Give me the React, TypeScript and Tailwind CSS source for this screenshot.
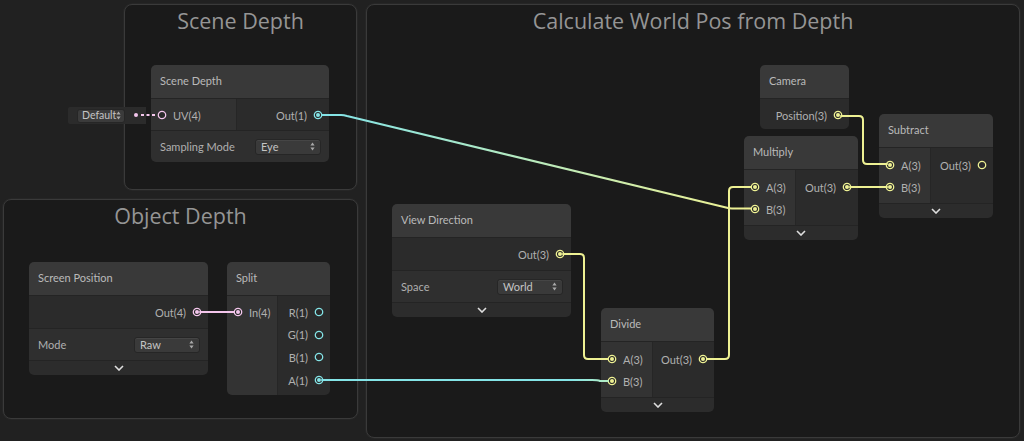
import React from 'react';

const YEL = '#EEF193';
const CYA = '#84E4E7';
const PNK = '#F4C6EC';

function Port({ color, connected }: { color: string; connected?: boolean }) {
  return (
    <svg width="10" height="10" viewBox="0 0 10 10" className="shrink-0">
      <circle cx="5" cy="5" r="3.7" fill="#2a2a2a" stroke={color} strokeWidth="1.3" />
      {connected && <circle cx="5" cy="5" r="2" fill={color} />}
    </svg>
  );
}

type P = { label: string; color: string; connected?: boolean };

function InRow({ p, h }: { p: P; h: string }) {
  return (
    <div className={`flex items-center pl-[6px] gap-[6px] ${h}`}>
      <Port color={p.color} connected={p.connected} />
      <span className="text-[11px] text-[#b0b0b0] leading-none">{p.label}</span>
    </div>
  );
}

function OutRow({ p, h }: { p: P; h: string }) {
  return (
    <div className={`flex items-center justify-end pr-[6px] gap-[6px] ${h}`}>
      <span className="text-[11px] text-[#b0b0b0] leading-none">{p.label}</span>
      <Port color={p.color} connected={p.connected} />
    </div>
  );
}

function Header({ title }: { title: string }) {
  return (
    <div className="h-[34px] flex items-center pl-[9px] bg-[#393939] border-b border-[#242424] text-[11px] text-[#bababa]">
      {title}
    </div>
  );
}

function Collapse() {
  return (
    <div className="h-[15px] flex items-center justify-center bg-[#2c2c2c] border-t border-[#242424]">
      <svg width="10" height="6" viewBox="0 0 10 6">
        <polyline points="1,1 5,5 9,1" fill="none" stroke="#dedede" strokeWidth="1.6" />
      </svg>
    </div>
  );
}

function Arrows() {
  return (
    <svg width="5" height="9" viewBox="0 0 5 9" className="shrink-0">
      <polygon points="2.5,0.5 4.6,3.4 0.4,3.4" fill="#aaaaaa" />
      <polygon points="2.5,8.5 4.6,5.6 0.4,5.6" fill="#aaaaaa" />
    </svg>
  );
}

function Dropdown({ value }: { value: string }) {
  return (
    <div className="w-[66px] h-[16px] rounded-[3px] bg-[#3a3a3a] border border-[#262626] flex items-center justify-between pl-[5px] pr-[5px] shadow-[inset_0_1px_0_#454545]">
      <span className="text-[11px] text-[#c4c4c4] leading-none">{value}</span>
      <Arrows />
    </div>
  );
}

function ControlRow({ label, value }: { label: string; value: string }) {
  return (
    <div className="h-[32px] flex items-center justify-between pl-[9px] pr-[8px] bg-[#2f2f2f] border-t border-[#242424]">
      <span className="text-[11px] text-[#b0b0b0] leading-none">{label}</span>
      <Dropdown value={value} />
    </div>
  );
}

function Group({ cls, title }: { cls: string; title: string }) {
  return (
    <div className={`absolute rounded-[8px] bg-[#1a1a1a] border border-[#3a3a3a] shadow-[0_0_0_1px_#262626] ${cls}`}>
      <div className="flex justify-center pt-[1px] text-[21.5px] leading-[30px] text-[#959595] font-['Open_Sans',sans-serif]">{title}</div>
    </div>
  );
}

export default function App() {
  return (
    <div className="relative w-[1024px] h-[441px] overflow-hidden bg-[#212121] font-['Lato',sans-serif]">
      <Group cls="left-[124px] top-[4px] w-[233px] h-[186px]" title="Scene Depth" />
      <Group cls="left-[3px] top-[199px] w-[355px] h-[220px]" title="Object Depth" />
      <Group cls="left-[366px] top-[4px] w-[654px] h-[434px]" title="Calculate World Pos from Depth" />

      {/* Default UV control */}
      <div className="absolute left-[68px] top-[107px] w-[78px] h-[17px] bg-[#2b2b2b] rounded-l-[2px] flex items-center pl-[9px]">
        <div className="w-[48px] h-[14px] rounded-[3px] bg-[#3b3b3b] border border-[#262626] flex items-center justify-between pl-[4px] pr-[3px]">
          <span className="text-[10.5px] text-[#c4c4c4] leading-none">Default</span>
          <Arrows />
        </div>
      </div>

      {/* Scene Depth node */}
      <div className="absolute left-[151px] top-[65px] w-[178px] rounded-[5px] overflow-hidden">
        <Header title="Scene Depth" />
        <div className="flex">
          <div className="w-[86px] bg-[#323232] pt-[5px] pb-[4px] border-r border-[#262626]">
            <InRow p={{ label: 'UV(4)', color: PNK }} h="h-[22px]" />
          </div>
          <div className="flex-1 bg-[#2b2b2b] pt-[5px] pb-[4px]">
            <OutRow p={{ label: 'Out(1)', color: CYA, connected: true }} h="h-[22px]" />
          </div>
        </div>
        <ControlRow label="Sampling Mode" value="Eye" />
      </div>

      {/* Screen Position node */}
      <div className="absolute left-[29px] top-[262px] w-[179px] rounded-[5px] overflow-hidden">
        <Header title="Screen Position" />
        <div className="bg-[#2b2b2b] pt-[5px] pb-[5px]">
          <OutRow p={{ label: 'Out(4)', color: PNK, connected: true }} h="h-[22px]" />
        </div>
        <ControlRow label="Mode" value="Raw" />
        <Collapse />
      </div>

      {/* Split node */}
      <div className="absolute left-[227px] top-[262px] w-[103px] rounded-[5px] overflow-hidden">
        <Header title="Split" />
        <div className="flex">
          <div className="w-[51px] bg-[#333333] pt-[5px] pb-[5px] border-r border-[#262626]">
            <InRow p={{ label: 'In(4)', color: PNK, connected: true }} h="h-[22px]" />
          </div>
          <div className="flex-1 bg-[#2b2b2b] pt-[5px] pb-[4px]">
            <OutRow p={{ label: 'R(1)', color: CYA }} h="h-[22.6px]" />
            <OutRow p={{ label: 'G(1)', color: CYA }} h="h-[22.6px]" />
            <OutRow p={{ label: 'B(1)', color: CYA }} h="h-[22.6px]" />
            <OutRow p={{ label: 'A(1)', color: CYA, connected: true }} h="h-[22.6px]" />
          </div>
        </div>
      </div>

      {/* View Direction node */}
      <div className="absolute left-[392px] top-[204px] w-[179px] rounded-[5px] overflow-hidden">
        <Header title="View Direction" />
        <div className="bg-[#2b2b2b] pt-[5px] pb-[5px]">
          <OutRow p={{ label: 'Out(3)', color: YEL, connected: true }} h="h-[22px]" />
        </div>
        <ControlRow label="Space" value="World" />
        <Collapse />
      </div>

      {/* Divide node */}
      <div className="absolute left-[601px] top-[308px] w-[113px] rounded-[5px] overflow-hidden">
        <Header title="Divide" />
        <div className="flex">
          <div className="w-[52px] bg-[#333333] pt-[6px] pb-[5px] border-r border-[#262626]">
            <InRow p={{ label: 'A(3)', color: YEL, connected: true }} h="h-[22px]" />
            <InRow p={{ label: 'B(3)', color: YEL, connected: true }} h="h-[22px]" />
          </div>
          <div className="flex-1 bg-[#2b2b2b] pt-[6px] pb-[5px]">
            <OutRow p={{ label: 'Out(3)', color: YEL, connected: true }} h="h-[22px]" />
          </div>
        </div>
        <Collapse />
      </div>

      {/* Camera node */}
      <div className="absolute left-[760px] top-[65px] w-[89px] rounded-[5px] overflow-hidden">
        <Header title="Camera" />
        <div className="bg-[#2b2b2b] pt-[5px] pb-[3px]">
          <OutRow p={{ label: 'Position(3)', color: YEL, connected: true }} h="h-[22px]" />
        </div>
      </div>

      {/* Multiply node */}
      <div className="absolute left-[744px] top-[136px] w-[114px] rounded-[5px] overflow-hidden">
        <Header title="Multiply" />
        <div className="flex">
          <div className="w-[52px] bg-[#333333] pt-[6px] pb-[5px] border-r border-[#262626]">
            <InRow p={{ label: 'A(3)', color: YEL, connected: true }} h="h-[22px]" />
            <InRow p={{ label: 'B(3)', color: YEL, connected: true }} h="h-[22px]" />
          </div>
          <div className="flex-1 bg-[#2b2b2b] pt-[6px] pb-[5px]">
            <OutRow p={{ label: 'Out(3)', color: YEL, connected: true }} h="h-[22px]" />
          </div>
        </div>
        <Collapse />
      </div>

      {/* Subtract node */}
      <div className="absolute left-[879px] top-[114px] w-[114px] rounded-[5px] overflow-hidden">
        <Header title="Subtract" />
        <div className="flex">
          <div className="w-[52px] bg-[#333333] pt-[6px] pb-[5px] border-r border-[#262626]">
            <InRow p={{ label: 'A(3)', color: YEL, connected: true }} h="h-[22px]" />
            <InRow p={{ label: 'B(3)', color: YEL, connected: true }} h="h-[22px]" />
          </div>
          <div className="flex-1 bg-[#2b2b2b] pt-[6px] pb-[5px]">
            <OutRow p={{ label: 'Out(3)', color: YEL }} h="h-[22px]" />
          </div>
        </div>
        <Collapse />
      </div>

      {/* Wires */}
      <svg className="absolute left-0 top-0 pointer-events-none" width="1024" height="441" viewBox="0 0 1024 441">
        <defs>
          <linearGradient id="g1" gradientUnits="userSpaceOnUse" x1="330" y1="0" x2="740" y2="0">
            <stop offset="0" stopColor={CYA} />
            <stop offset="1" stopColor={YEL} />
          </linearGradient>
          <linearGradient id="g2" gradientUnits="userSpaceOnUse" x1="330" y1="0" x2="612" y2="0">
            <stop offset="0" stopColor={CYA} />
            <stop offset="0.85" stopColor={CYA} />
            <stop offset="1" stopColor="#b8eec0" />
          </linearGradient>
        </defs>
        <g fill="none" strokeWidth="2" strokeLinecap="round" strokeLinejoin="round">
          <path d="M322,115 H341 Q344,115 347,116 L726,207.5 Q729,208.5 732,208.5 H751" stroke="url(#g1)" />
          <path d="M322,380 H592 Q598,380 600,381 H608" stroke="url(#g2)" />
          <path d="M563,254 H580 Q584,254 584,258 V355 Q584,359 588,359 H608" stroke={YEL} />
          <path d="M707,359 H725 Q729,359 729,355 V191 Q729,187 733,187 H751" stroke={YEL} />
          <path d="M850,187 H887" stroke={YEL} />
          <path d="M841,116 H859 Q863,116 863,120 V160 Q863,164 867,164 H887" stroke={YEL} />
          <path d="M200,312 H234" stroke={PNK} />
          <path d="M141,115 H157" stroke={PNK} strokeDasharray="3 2.5" strokeLinecap="butt" />
        </g>
        <circle cx="136" cy="115" r="2" fill={PNK} />
      </svg>
    </div>
  );
}
